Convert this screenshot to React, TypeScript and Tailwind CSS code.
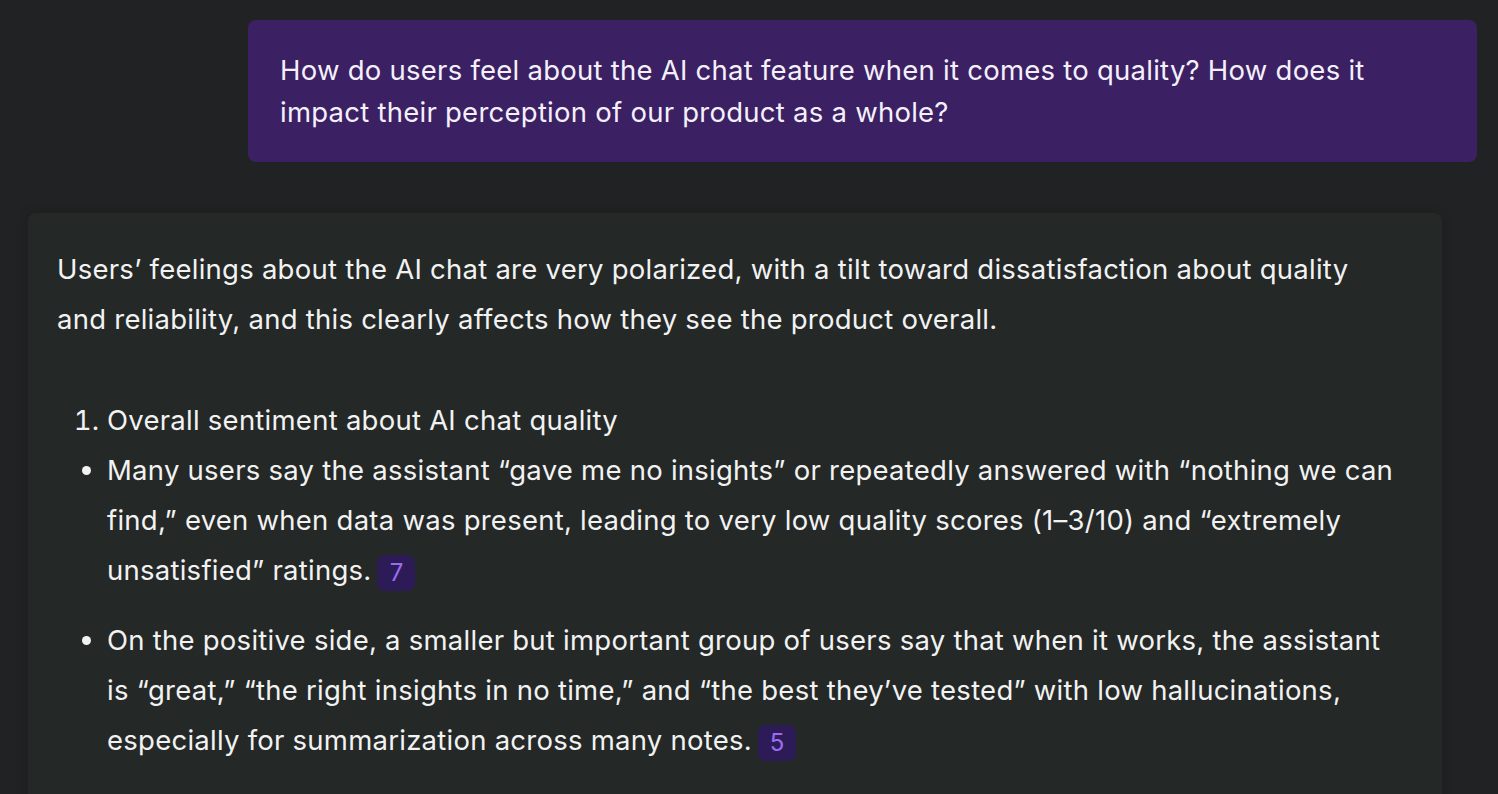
function Cite({ n }: { n: number }) {
  return (
    <span className="ml-[6px] inline-flex h-[36px] w-[38px] items-center justify-center rounded-lg bg-[#2d1b58] align-middle text-[24px] leading-none tracking-normal text-[#9a6cf0]">
      {n}
    </span>
  )
}

export default function App() {
  return (
    <div
      className="min-h-[794px] w-full overflow-hidden bg-[#212224] text-[#f2f2f2]"
      style={{ fontFamily: 'Inter, "Noto Sans", sans-serif' }}
    >
      {/* user message */}
      <div className="flex justify-end pt-[20px] pr-[21px]">
        <div className="w-[1229px] rounded-lg bg-[#3b2063] px-8 py-[29px] text-[27.5px] leading-[42px] tracking-[0.25px] text-[#f4f0fa]">
          How do users feel about the AI chat feature when it comes to quality? How does it impact their perception of our product as a whole?
        </div>
      </div>

      {/* assistant response */}
      <div className="mt-[51px] ml-[28px] w-[1414px] rounded-lg bg-[#242827] pt-[31px] pr-[45px] pb-16 pl-[29px] text-[27.5px] leading-[50px] tracking-[0.25px] shadow-[0_0_12px_rgba(0,0,0,0.15)]">
        <p>
          Users’ feelings about the AI chat are very polarized, with a tilt toward dissatisfaction about quality and reliability, and this clearly affects how they see the product overall.
        </p>

        <ol className="mt-[51px] list-decimal pl-[50px]">
          <li>Overall sentiment about AI chat quality</li>
        </ol>
        <ul className="list-disc pl-[50px]">
          <li className="mb-5">
            Many users say the assistant “gave me no insights” or repeatedly answered with “nothing we can find,” even when data was present, leading to very low quality scores (1–3/10) and “extremely unsatisfied” ratings.
            <Cite n={7} />
          </li>
          <li>
            On the positive side, a smaller but important group of users say that when it works, the assistant is “great,” “the right insights in no time,” and “the best they’ve tested” with low hallucinations, especially for summarization across many notes.
            <Cite n={5} />
          </li>
        </ul>
      </div>
    </div>
  )
}
